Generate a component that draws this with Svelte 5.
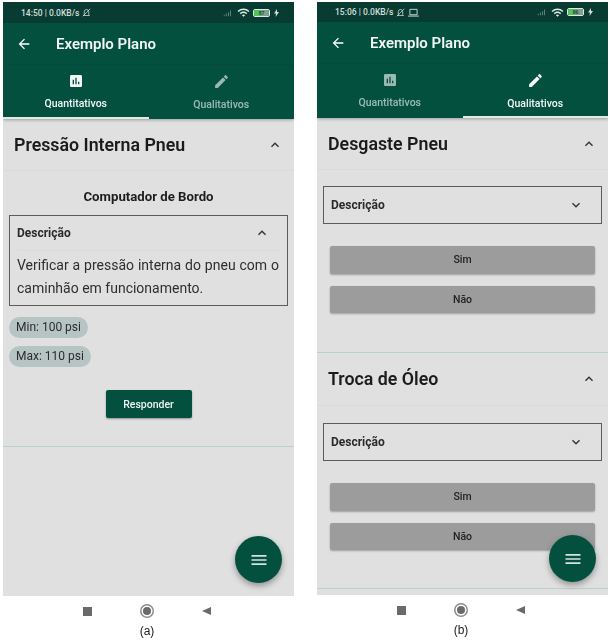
<script>
  const arrow = 'M20 11H7.83l5.59-5.59L12 4l-8 8 8 8 1.41-1.41L7.83 13H20v-2z';
  const poll = 'M19 3H5c-1.1 0-2 .9-2 2v14c0 1.1.9 2 2 2h14c1.1 0 2-.9 2-2V5c0-1.1-.9-2-2-2zM9 17H7v-7h2v7zm4 0h-2V7h2v10zm4 0h-2v-4h2v4z';
  const edit = 'M3 17.25V21h3.75L17.81 9.94l-3.75-3.75L3 17.25zM20.71 7.04c.39-.39.39-1.02 0-1.41l-2.34-2.34c-.39-.39-1.02-.39-1.41 0l-1.83 1.83 3.75 3.75 1.83-1.83z';
  const less = 'M12 8l-6 6 1.41 1.41L12 10.83l4.59 4.58L18 14z';
  const more = 'M16.59 8.59L12 13.17 7.41 8.59 6 10l6 6 6-6z';
  const wifi = 'M1 9l2 2c4.97-4.97 13.03-4.97 18 0l2-2C16.93 2.93 7.08 2.93 1 9zm8 8l3 3 3-3c-1.65-1.66-4.34-1.66-6 0zm-4-4l2 2c2.76-2.76 7.24-2.76 10 0l2-2C15.14 9.14 8.87 9.14 5 13z';
  const menu = 'M3 18h18v-2H3v2zm0-5h18v-2H3v2zm0-7v2h18V6H3z';

  const questions = ['Desgaste Pneu', 'Troca de Óleo'];
</script>

{#snippet icon(d, size, cls = '')}
  <svg class={cls} width={size} height={size} viewBox="0 0 24 24" fill="currentColor"><path {d} /></svg>
{/snippet}

{#snippet top(time, battery, laptop, first)}
  <div class="status">
    <span class="clock">{time} | 0.0KB/s</span>
    <svg class="bell" width="9" height="9" viewBox="0 0 12 12" fill="none" stroke="currentColor">
      <path d="M3 9V5a3 3 0 0 1 6 0v4l1 1H2zM1 11L11 1" />
    </svg>
    {#if laptop}
      <svg class="laptop" width="11" height="9" viewBox="0 0 12 10" fill="none" stroke="currentColor">
        <path d="M2 1.5h8v6H2zM0 9h12" />
      </svg>
    {/if}
    <span class="spacer"></span>
    <svg class="signal" width="10" height="8" viewBox="0 0 12 8" fill="currentColor">
      <path d="M1 6h1v2H1zM3.500 4.500h1V8h-1zM6 3h1v5H6zM8.500 1h1v7h-1z" />
    </svg>
    {@render icon(wifi, 13, 'wifi')}
    <span class="battery"><span class="level">{battery}</span></span>
    <svg class="bolt" width="5" height="8" viewBox="0 0 5 8" fill="currentColor"><path d="M3 0L0 4.500h2L1.500 8 5 3H3z" /></svg>
  </div>
  <div class="titlebar">
    {@render icon(arrow, 16, 'back')}
    <span class="title">Exemplo Plano</span>
  </div>
  <div class="tabs">
    <div class="tab" class:active={first}>
      {@render icon(poll, 16)}
      <span>Quantitativos</span>
    </div>
    <div class="tab" class:active={!first}>
      {@render icon(edit, 17)}
      <span>Qualitativos</span>
    </div>
  </div>
{/snippet}

{#snippet sectionHead(title)}
  <div class="section-head">
    <h2>{title}</h2>
    {@render icon(less, 16, 'chev')}
  </div>
{/snippet}

{#snippet fab()}
  <div class="fab">{@render icon(menu, 20)}</div>
{/snippet}

{#snippet nav(label)}
  <div class="nav">
    <span class="nav-slot"><span class="square"></span></span>
    <span class="nav-slot"><span class="circle"></span></span>
    <span class="nav-slot"><span class="triangle"></span></span>
  </div>
  <div class="caption">{label}</div>
{/snippet}

<div class="page">
  <div class="figure">
    <div class="phone">
      {@render top('14:50', '87', false, true)}
      <div class="body">
        {@render sectionHead('Pressão Interna Pneu')}
        <div class="content">
          <h3>Computador de Bordo</h3>
          <div class="box">
            <div class="box-head open">
              <span>Descrição</span>
              {@render icon(less, 16, 'chev')}
            </div>
            <p>Verificar a pressão interna do pneu com o caminhão em funcionamento.</p>
          </div>
          <span class="chip first">Min: 100 psi</span>
          <span class="chip">Max: 110 psi</span>
          <div class="answer"><button>Responder</button></div>
        </div>
      </div>
      {@render fab()}
    </div>
    {@render nav('(a)')}
  </div>

  <div class="figure second">
    <div class="phone">
      {@render top('15:06', '86', true, false)}
      <div class="body">
        {#each questions as title}
          <div class="question">
            {@render sectionHead(title)}
            <div class="box closed">
              <div class="box-head">
                <span>Descrição</span>
                {@render icon(more, 16, 'chev')}
              </div>
            </div>
            <button class="choice">Sim</button>
            <button class="choice">Não</button>
          </div>
        {/each}
      </div>
      {@render fab()}
    </div>
    {@render nav('(b)')}
  </div>
</div>

<style>
  :global(body) {
    margin: 0;
    background: #fff;
  }

  .page {
    display: flex;
    gap: 23px;
    width: 610px;
    height: 643px;
    padding: 2px 0 0 3px;
    box-sizing: border-box;
    overflow: hidden;
    font-family: Roboto, sans-serif;
    filter: blur(0.35px);
  }

  .figure {
    width: 291px;
    flex: none;
  }

  .phone {
    position: relative;
    height: 594px;
    background: #e0e0e0;
    display: flex;
    flex-direction: column;
    overflow: hidden;
  }

  .second .phone {
    height: 593px;
  }

  .status {
    height: 21px;
    flex: none;
    display: flex;
    align-items: center;
    gap: 3px;
    padding: 0 15px 0 18px;
    background: #083c32;
    color: #d5dfdc;
    font-size: 8.5px;
    font-weight: 500;
  }

  .second .status {
    height: 20px;
  }

  .spacer {
    flex: 1;
  }

  .signal {
    color: #6f8e86;
    margin-right: 1px;
  }

  .wifi {
    color: #dfe8e5;
  }

  .battery {
    width: 17px;
    height: 8px;
    border: 1px solid #dfe8e5;
    border-radius: 2px;
    box-sizing: border-box;
    display: flex;
    overflow: hidden;
    margin-right: 1px;
  }

  .level {
    width: 100%;
    background: linear-gradient(90deg, #56c25a 45%, #7fa08f 45%);
    color: #0b3a30;
    font-size: 5px;
    line-height: 6px;
    text-align: center;
  }

  .titlebar {
    height: 42px;
    flex: none;
    display: flex;
    align-items: center;
    padding-left: 13px;
    background: #04503f;
    color: #fff;
  }

  .title {
    margin-left: 24px;
    font-size: 15px;
    font-weight: 600;
    color: #f1f5f4;
  }

  .tabs {
    display: flex;
    flex: none;
    height: 54px;
    background: #04503f;
    box-shadow: 0 1px 3px rgba(0, 0, 0, 0.3);
    position: relative;
  }

  .tab {
    flex: 1;
    display: flex;
    flex-direction: column;
    align-items: center;
    box-sizing: border-box;
    padding-top: 8px;
    color: rgba(255, 255, 255, 0.6);
    font-size: 10.5px;
    font-weight: 500;
    border-bottom: 2px solid transparent;
  }

  .tab span {
    margin-top: 8px;
  }

  .tab.active {
    color: #f4f7f6;
    border-bottom-color: #e4e8e7;
  }

  .section-head {
    height: 51px;
    display: flex;
    align-items: center;
    justify-content: space-between;
    padding: 0 11px;
    border-bottom: 1px solid #dadada;
    color: #1b1b1b;
  }

  h2 {
    margin: 0 0 1px;
    font-size: 17.8px;
    font-weight: 600;
  }

  .chev {
    color: #333;
  }

  .content {
    padding: 0 6px;
    border-bottom: 1px solid #bcd0c9;
    height: 275px;
  }

  h3 {
    margin: 0;
    padding-top: 17px;
    height: 27px;
    font-size: 13.2px;
    font-weight: 700;
    line-height: 17px;
    text-align: center;
    color: #1d1d1d;
  }

  .box {
    border: 1.5px solid #5c5c5c;
    box-sizing: border-box;
    height: 91px;
    padding: 0 7px;
  }

  .box-head {
    height: 34px;
    display: flex;
    align-items: center;
    justify-content: space-between;
    padding-right: 10px;
    font-size: 12px;
    font-weight: 700;
    color: #2a2a2a;
  }

  .box-head.open {
    border-bottom: 1px solid #dadada;
  }

  p {
    margin: 3px 1px 0 0;
    font-size: 14px;
    line-height: 23px;
    text-align: justify;
    color: #2e2e2e;
  }

  .chip {
    display: table;
    height: 21px;
    line-height: 21px;
    padding: 0 7px;
    margin-top: 8px;
    border-radius: 11px;
    background: #b6c5c3;
    color: #2b2b2b;
    font-size: 12px;
  }

  .chip.first {
    margin-top: 11px;
  }

  .answer {
    display: flex;
    justify-content: center;
    padding-top: 23px;
  }

  .answer button {
    width: 86px;
    height: 28px;
    border: none;
    border-radius: 2px;
    background: #04503f;
    color: #eef3f1;
    font-family: inherit;
    font-size: 10.5px;
    font-weight: 500;
    box-shadow: 0 1px 2px rgba(0, 0, 0, 0.35);
  }

  .question {
    display: flex;
    flex-direction: column;
    border-bottom: 1px solid #bcd0c9;
    height: 235px;
    flex: none;
    box-sizing: border-box;
  }

  .question + .question {
    height: 236px;
  }

  .question + .question .section-head {
    height: 52px;
  }

  .question + .question .closed {
    margin-top: 17px;
  }

  .closed {
    height: 38px;
    margin: 16px 6px 0;
  }

  .closed .box-head {
    height: 35px;
  }

  .choice {
    margin: 0 13px;
    height: 27.5px;
    flex: none;
    border: none;
    border-radius: 2px;
    background: #9c9c9c;
    color: #222;
    font-family: inherit;
    font-size: 10.5px;
    font-weight: 500;
    box-shadow: 0 1px 2px rgba(0, 0, 0, 0.3);
  }

  .closed + .choice {
    margin-top: 22px;
  }

  .choice + .choice {
    margin-top: 12px;
  }

  .fab {
    position: absolute;
    right: 12px;
    bottom: 13px;
    width: 47px;
    height: 47px;
    border-radius: 50%;
    display: flex;
    align-items: center;
    justify-content: center;
    background: #04503f;
    color: #d5e2de;
    box-shadow: 0 3px 6px rgba(0, 0, 0, 0.35);
  }

  .nav {
    display: flex;
    justify-content: center;
    gap: 46px;
    margin-top: 8px;
    padding-right: 3px;
  }

  .nav-slot {
    width: 14px;
    height: 14px;
    display: flex;
    align-items: center;
    justify-content: center;
  }

  .square {
    width: 9px;
    height: 9px;
    background: #6a6a6a;
  }

  .circle {
    width: 8px;
    height: 8px;
    border-radius: 50%;
    background: #6a6a6a;
    box-shadow: 0 0 0 1.5px #fff, 0 0 0 3px #8c8c8c;
  }

  .triangle {
    width: 0;
    height: 0;
    border-top: 4.5px solid transparent;
    border-bottom: 4.5px solid transparent;
    border-right: 9px solid #6a6a6a;
    margin-left: -2px;
  }

  .caption {
    margin-top: 6px;
    padding-right: 3px;
    font-family: "Liberation Sans", sans-serif;
    font-size: 12px;
    line-height: 14px;
    text-align: center;
    color: #222;
  }
</style>
